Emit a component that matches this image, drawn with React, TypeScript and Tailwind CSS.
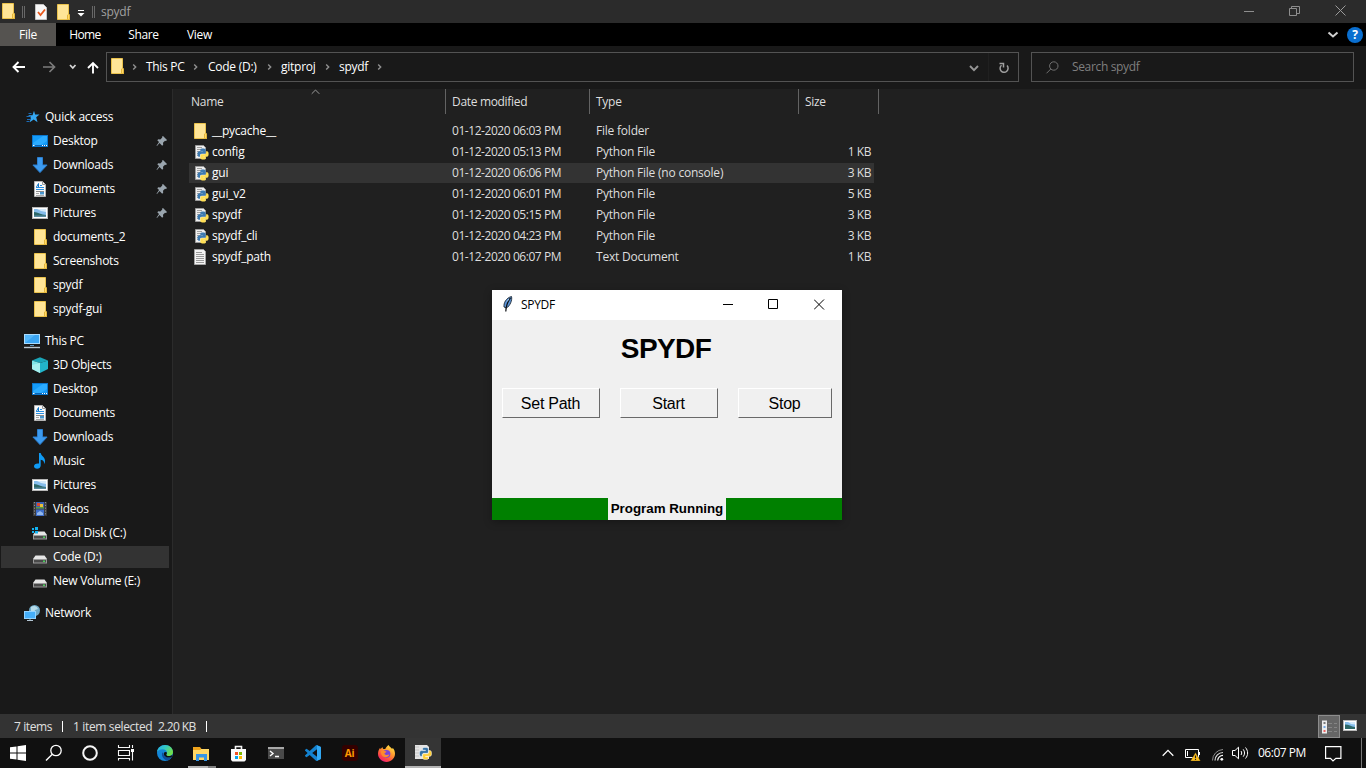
import type { ReactNode } from "react";

const PY_BLUE =
  "M14.25.18l.9.2.73.26.59.3.45.32.34.34.25.34.16.33.1.3.04.26.02.2-.01.13V8.5l-.05.63-.13.55-.21.46-.26.38-.3.31-.33.25-.35.19-.35.14-.33.1-.3.07-.26.04-.21.02H8.77l-.69.05-.59.14-.5.22-.41.27-.33.32-.27.35-.2.36-.15.37-.1.35-.07.32-.04.27-.02.21v3.06H3.17l-.21-.03-.28-.07-.32-.12-.35-.18-.36-.26-.36-.36-.35-.46-.32-.59-.28-.73-.21-.88-.14-1.05-.05-1.23.06-1.22.16-1.04.24-.87.32-.71.36-.57.4-.44.42-.33.42-.24.4-.16.36-.1.32-.05.24-.01h.16l.06.01h8.16v-.83H6.18l-.01-2.75-.02-.37.05-.34.11-.31.17-.28.25-.26.31-.23.38-.2.44-.18.51-.15.58-.12.64-.1.71-.06.77-.04.84-.02 1.27.05z";
const PY_YELLOW =
  "M21.1 6.11l.28.06.32.12.35.18.36.27.36.35.35.47.32.59.28.73.21.88.14 1.04.05 1.23-.06 1.23-.16 1.04-.24.86-.32.71-.36.57-.4.45-.42.33-.42.24-.4.16-.36.09-.32.05-.24.02-.16-.01h-8.22v.82h5.84l.01 2.76.02.36-.05.34-.11.31-.17.29-.25.25-.31.24-.38.2-.44.17-.51.15-.58.13-.64.09-.71.07-.77.04-.84.01-1.27-.04-1.07-.14-.9-.2-.73-.25-.59-.3-.45-.33-.34-.34-.25-.34-.16-.33-.1-.3-.04-.25-.02-.2.01-.13v-5.34l.05-.64.13-.54.21-.46.26-.38.3-.32.33-.24.35-.2.35-.14.33-.1.3-.06.26-.04.21-.02.13-.01h5.84l.69-.05.59-.14.5-.21.41-.28.33-.32.27-.35.2-.36.15-.36.1-.35.07-.32.04-.28.02-.21V6.07h2.09l.14.01z";

function Svg({ children, w = 16, h = 16 }: { children: ReactNode; w?: number; h?: number }) {
  return (
    <svg width={w} height={h} viewBox={`0 0 ${w} ${h}`} fill="none" className="block shrink-0">
      {children}
    </svg>
  );
}

const Folder = ({ dx = 0 }: { dx?: number }) => (
  <Svg>
    <g transform={`translate(${dx} 0)`}>
      <path d="M1.5.5h11v9.500l1 1v4.500h-12z" fill="#ffe597" stroke="#eac24c" />
      <path d="M11.5 15.5v-4.500l1-.9 1 .9v4.500z" fill="#ffd867" stroke="#e3b53a" />
    </g>
  </Svg>
);

const Star = () => (
  <Svg>
    <path d="M10 1.800l1.100 3.600h4.400l-3.300 2.800 1.300 5-3.800-2.700-4 2.700 1.200-4.400L4.200 6.200h4.300z" fill="#36a9f4" />
    <path d="M4.500 4.500h3M2.500 7.500h4.500M3 10.500h3.500M2.500 12.500h3" stroke="#1b6cb8" />
  </Svg>
);

const Desktop = () => (
  <Svg>
    <rect x=".5" y="2.500" width="15" height="11" fill="#149bf8" stroke="#0b76cc" />
    <path d="M1 10L11 3h4v5L9 12H1z" fill="#2babff" />
    <path d="M1 12.500h14" stroke="#0a63b4" />
    <path d="M1 12.500h1.500M10 12.500h1M12 12.500h1M14 12.500h1" stroke="#fff" />
  </Svg>
);

const Download = () => (
  <Svg>
    <path d="M5.500.500h5V8h4.600L8 15.600.900 8h4.600z" fill="#3c9bf0" stroke="#2b7fd0" />
  </Svg>
);

const DocIcon = () => (
  <Svg>
    <path d="M2.500.500h8l3 3v12h-11z" fill="#fafafa" stroke="#b5b5b5" />
    <path d="M10.500.500v3h3" stroke="#999" />
    <path d="M4 6.500h8M4 8.500h8M8 4.500h2" stroke="#2a8fe0" />
    <path d="M4.500 6L6.500 2.500V6" stroke="#1277c8" />
    <path d="M4 10.500h8" stroke="#8a8a8a" />
    <path d="M4 12.500h3M4 14.500h8" stroke="#a8a8a8" />
    <rect x="8" y="11" width="4" height="2.500" fill="#4795ce" />
  </Svg>
);

const Picture = () => (
  <Svg>
    <rect x=".5" y="2.500" width="15" height="11" fill="#fff" stroke="#b8b8b8" />
    <rect x="2" y="4" width="12" height="8" fill="#86bdec" />
    <path d="M5 4h9v3L9 6z" fill="#d5eafa" />
    <path d="M2 7c4 0 7 3 12 3v2H2z" fill="#2d6868" />
    <path d="M2 10.500h12V12H2z" fill="#5a8ca2" />
  </Svg>
);

const Monitor = () => (
  <Svg>
    <rect x=".5" y="1.500" width="15" height="9" fill="#54b7fb" stroke="#a9dcff" />
    <path d="M1 10L11 2h4v8z" fill="#3aa5f3" />
    <path d="M6 12.500h4" stroke="#5a93bd" />
    <path d="M0 14.500h16" stroke="#b9c7d2" strokeWidth="1.400" />
  </Svg>
);

const Cube = () => (
  <Svg>
    <path d="M8 .300l8 3.200L8 6 0 3.500z" fill="#1aa5b8" />
    <path d="M0 3.500L8 6v10l-8-4z" fill="#7fe6e8" />
    <path d="M16 3.500L8 6v10l8-4z" fill="#22b5ca" />
    <path d="M0 8l8-2v10l-8-4z" fill="#a5f0ef" />
  </Svg>
);

const Music = () => (
  <Svg>
    <path d="M7 0h1.700c.3 3 5 4.300 4.300 8.800-.1.900-.6 1.800-1 2.300.4-2.300-.4-4-3.300-4.400V12.500c0 2-1.700 3.300-3.600 3.300C3.300 15.800 2 14.800 2 13.300c0-1.900 1.900-3.200 5-2.800z" fill="#0f9bf5" />
  </Svg>
);

const Video = () => (
  <Svg>
    <rect x="1" y="1" width="14" height="14" fill="#3c3c3c" />
    <path d="M2.500 1v14M13.500 1v14" stroke="#8d8d8d" strokeDasharray="1.200 1.600" />
    <rect x="4" y="1" width="8" height="6.500" fill="#3a62b5" />
    <rect x="4" y="8.500" width="8" height="6.500" fill="#3f6fca" />
    <path d="M5 2h3v3H5z" fill="#d9482e" />
    <path d="M8 3h3v3H8z" fill="#e8bf3a" />
    <path d="M4 6h8v1.500H4z" fill="#5a9940" />
    <path d="M5 12l3-2 3 2v2H5z" fill="#93b7ea" />
  </Svg>
);

function Drive({ win = false }: { win?: boolean }) {
  return (
    <Svg>
      <path d="M3.500 6.500h9L15 10H1z" fill="#e6e6e6" />
      <rect x="1" y="10" width="14" height="4.500" fill="#9a9a9a" />
      <rect x="2" y="11" width="12" height="2.500" fill="#4a4a4a" />
      <rect x="11" y="11.500" width="2" height="1.500" fill="#4bd15b" />
      {win && <path d="M0 3h2v2H0zM3 2h3v3H3zM0 6h2v2H0zM3 6h3v2.500H3z" fill="#12b2f1" />}
    </Svg>
  );
}

const Network = () => (
  <Svg>
    <circle cx="10.500" cy="5.500" r="5.500" fill="#6fa9c6" />
    <path d="M7 2c3-2 6-1 7 2l-3 1-1 3-3-2z" fill="#b5dbe9" />
    <rect x=".5" y="6.500" width="11" height="7" fill="#45aef8" stroke="#92d3ff" />
    <path d="M3 15.500h6" stroke="#b3c6d4" />
    <path d="M6 14v1" stroke="#7aa" />
  </Svg>
);

const Pin = () => (
  <Svg w={12} h={12}>
    <path d="M7 1l4 4-1 1-1-.3-2 2 .2 2-1 1-2.700-2.700L1 11l-.5-.3L3 7 1.300 5.200l1-1 2 .2 2-2L6 1.800z" fill="#9aa5ae" />
  </Svg>
);

const PyFile = () => (
  <Svg>
    <path d="M2.500 1.500h8l2 2v11h-10z" fill="#efefef" stroke="#9c9c9c" />
    <path d="M4 3.500h5M4 5.500h6M4 7.500h4M4 9.500h3M4 11.500h3" stroke="#a0a0a0" />
    <g transform="translate(4.500 4.500) scale(.46)">
      <path d={PY_BLUE} fill="#3d7ab0" />
      <path d={PY_YELLOW} fill="#ffdf55" />
    </g>
  </Svg>
);

const TxtFile = () => (
  <Svg>
    <path d="M1.500.500h9l2 2v13h-11z" fill="#f4f4f4" stroke="#a5a5a5" />
    <path d="M3 3.500h6M3 5.500h8M3 7.500h8M3 9.500h8M3 11.500h8M3 13.500h8" stroke="#9a9a9a" />
  </Svg>
);

const Chev = () => (
  <Svg w={6} h={8}>
    <path d="M1.200 1.500L3.700 4 1.200 6.500" stroke="#909090" strokeWidth="1.400" />
  </Svg>
);

type NavEntry = { icon: ReactNode; label: string; top?: boolean; pin?: boolean; selected?: boolean };

const quick: NavEntry[] = [
  { icon: <Star />, label: "Quick access", top: true },
  { icon: <Desktop />, label: "Desktop", pin: true },
  { icon: <Download />, label: "Downloads", pin: true },
  { icon: <DocIcon />, label: "Documents", pin: true },
  { icon: <Picture />, label: "Pictures", pin: true },
  { icon: <Folder dx={1} />, label: "documents_2" },
  { icon: <Folder dx={1} />, label: "Screenshots" },
  { icon: <Folder dx={1} />, label: "spydf" },
  { icon: <Folder dx={1} />, label: "spydf-gui" },
];

const pc: NavEntry[] = [
  { icon: <Monitor />, label: "This PC", top: true },
  { icon: <Cube />, label: "3D Objects" },
  { icon: <Desktop />, label: "Desktop" },
  { icon: <DocIcon />, label: "Documents" },
  { icon: <Download />, label: "Downloads" },
  { icon: <Music />, label: "Music" },
  { icon: <Picture />, label: "Pictures" },
  { icon: <Video />, label: "Videos" },
  { icon: <Drive win />, label: "Local Disk (C:)" },
  { icon: <Drive />, label: "Code (D:)", selected: true },
  { icon: <Drive />, label: "New Volume (E:)" },
];

const network: NavEntry[] = [{ icon: <Network />, label: "Network", top: true }];

function NavGroup({ items }: { items: NavEntry[] }) {
  return (
    <ul>
      {items.map((e) => (
        <li key={e.label} className="flex h-6 items-center pl-px">
          <div
            className={`flex h-[22px] w-[168px] items-center gap-[5px] ${e.top ? "pl-[23px]" : "pl-[31px]"} ${e.selected ? "bg-[#333333]" : ""}`}
          >
            {e.icon}
            <span className="grow whitespace-nowrap text-white">{e.label}</span>
            {e.pin && (
              <span className="mr-px">
                <Pin />
              </span>
            )}
          </div>
        </li>
      ))}
    </ul>
  );
}

const files = [
  { icon: <Folder />, name: "__pycache__", date: "01-12-2020 06:03 PM", type: "File folder", size: "" },
  { icon: <PyFile />, name: "config", date: "01-12-2020 05:13 PM", type: "Python File", size: "1 KB" },
  { icon: <PyFile />, name: "gui", date: "01-12-2020 06:06 PM", type: "Python File (no console)", size: "3 KB", selected: true },
  { icon: <PyFile />, name: "gui_v2", date: "01-12-2020 06:01 PM", type: "Python File", size: "5 KB" },
  { icon: <PyFile />, name: "spydf", date: "01-12-2020 05:15 PM", type: "Python File", size: "3 KB" },
  { icon: <PyFile />, name: "spydf_cli", date: "01-12-2020 04:23 PM", type: "Python File", size: "3 KB" },
  { icon: <TxtFile />, name: "spydf_path", date: "01-12-2020 06:07 PM", type: "Text Document", size: "1 KB" },
];

function TitleBar() {
  return (
    <header className="flex h-[23px] shrink-0 items-center bg-[#2b2b2b]">
      <div className="flex grow items-center">
        <span className="ml-px pb-px">
          <Folder />
        </span>
        <span className="ml-[5px] h-3 w-[3px] border-x border-[#686868]" />
        <span className="ml-[8px]">
          <Svg>
            <path d="M2.500.500h8l3 3v12h-11z" fill="#f8f8f8" stroke="#c4c4c4" />
            <path d="M5 8l2.500 3L12 5.500" stroke="#e8581c" strokeWidth="1.800" />
          </Svg>
        </span>
        <span className="ml-[7px]">
          <Folder />
        </span>
        <span className="ml-[5px] mt-[3px]">
          <Svg w={8} h={8}>
            <path d="M1 1.500h6" stroke="#fff" />
            <path d="M.5 4h7L4 7.500z" fill="#fff" />
          </Svg>
        </span>
        <span className="ml-[7px] h-3 w-[3px] border-x border-[#686868]" />
        <span className="ml-[6px] text-[#a0a0a0]">spydf</span>
      </div>
      <div className="mr-[20px] flex items-center gap-[35px] pb-[3px]">
        <Svg w={11} h={11}>
          <path d="M1 6.500h10" stroke="#8e8e8e" />
        </Svg>
        <Svg w={11} h={11}>
          <path d="M.5 3.500h7v7h-7zM2.500 3V1.500h8v7H8" stroke="#8e8e8e" />
        </Svg>
        <Svg w={11} h={11}>
          <path d="M.5.500l10 10M10.500.500l-10 10" stroke="#9b9b9b" />
        </Svg>
      </div>
    </header>
  );
}

function Ribbon() {
  return (
    <nav className="flex h-[23px] shrink-0 items-center bg-black text-white">
      <span className="flex h-full w-14 items-center justify-center bg-[#555350] pt-px">File</span>
      <span className="w-[58px] pt-px text-center tracking-[-0.6px]">Home</span>
      <span className="w-[59px] pt-px text-center tracking-[-0.35px]">Share</span>
      <span className="w-[53px] pt-px text-center">View</span>
      <span className="grow" />
      <Svg w={12} h={8}>
        <path d="M1.500 1.500L6 5.500l4.500-4" stroke="#cfcfcf" strokeWidth="2" />
      </Svg>
      <span className="ml-[8px] mr-[3px] flex size-4 items-center justify-center rounded-full bg-[#0a6fd0] text-[12px] font-bold">?</span>
    </nav>
  );
}

function AddressBar() {
  return (
    <div className="flex h-[43px] shrink-0 items-center bg-[#191919] text-white">
      <span className="ml-[12px] pb-px">
        <Svg w={14} h={12}>
          <path d="M1.500 6H13M6.500 1l-5 5 5 5" stroke="#fff" strokeWidth="1.900" />
        </Svg>
      </span>
      <span className="ml-[17px] pb-px">
        <Svg w={14} h={12}>
          <path d="M0 6h11.500M6.500 1l5 5-5 5" stroke="#7c7c7c" strokeWidth="1.700" />
        </Svg>
      </span>
      <span className="ml-[12px] pb-[2px]">
        <Svg w={8} h={6}>
          <path d="M1 1l2.800 3L6.500 1" stroke="#d8d8d8" strokeWidth="1.700" />
        </Svg>
      </span>
      <span className="ml-[10px]">
        <Svg w={12} h={13}>
          <path d="M6 12.500V2M1 7l5-5 5 5" stroke="#fff" strokeWidth="1.900" />
        </Svg>
      </span>
      <div className="ml-[7px] mb-px flex h-[30px] w-[913px] items-center border border-[#535353] pl-[2px]">
        <span className="pb-[2px]">
          <Folder dx={1} />
        </span>
        <span className="ml-[7px]"><Chev /></span>
        <span className="ml-[8px] w-[39px] whitespace-nowrap tracking-[-0.3px]">This PC</span>
        <span className="ml-[8px]"><Chev /></span>
        <span className="ml-[9px] w-[50px] whitespace-nowrap">Code (D:)</span>
        <span className="ml-[9px]"><Chev /></span>
        <span className="ml-[8px] w-[36px] whitespace-nowrap">gitproj</span>
        <span className="ml-[8px]"><Chev /></span>
        <span className="ml-[8px] w-[30px] whitespace-nowrap tracking-[-0.3px]">spydf</span>
        <span className="ml-[8px]"><Chev /></span>
        <span className="grow" />
        <span className="pt-[2px]">
          <Svg w={10} h={7}>
            <path d="M1 1l4 4.200L9 1" stroke="#969696" strokeWidth="1.900" />
          </Svg>
        </span>
        <span className="ml-[9px] h-[28px] w-px bg-[#202020]" />
        <span className="ml-[9px] mr-[8px] pt-px">
          <Svg w={12} h={12}>
            <path d="M3.500 3.200A4 4 0 1 0 9 3.500" stroke="#a0a0a0" strokeWidth="1.500" />
            <path d="M1.500 1.500h4v4" stroke="#a0a0a0" strokeWidth="1.500" />
          </Svg>
        </span>
      </div>
      <div className="ml-[12px] mb-px flex h-[30px] w-[323px] items-center border border-[#535353] pl-[13px] text-[#7f7f7f]">
        <Svg w={14} h={13}>
          <circle cx="8.800" cy="5" r="4.200" stroke="#707070" />
          <path d="M5.800 8L1.500 12.300" stroke="#707070" />
        </Svg>
        <span className="ml-[13px] tracking-[-0.35px]">Search spydf</span>
      </div>
    </div>
  );
}

function FileList() {
  return (
    <section className="flex grow flex-col bg-[#202020] text-[#dedede]">
      <div className="flex h-[25px] pl-[18px]">
        <div className="relative flex w-[255px] items-center border-r border-[#636363]">
          Name
          <span className="absolute left-[120px] top-0">
            <Svg w={9} h={6}>
              <path d="M.7 4.800L4.500 1l3.800 3.800" stroke="#9a9a9a" />
            </Svg>
          </span>
        </div>
        <div className="flex w-[144px] items-center border-r border-[#636363] pl-[6px] tracking-[-0.32px]">Date modified</div>
        <div className="flex w-[209px] items-center border-r border-[#636363] pl-[6px]">Type</div>
        <div className="flex w-[80px] items-center border-r border-[#636363] pl-[6px] tracking-[-0.3px]">Size</div>
      </div>
      <ul className="mt-[6px] pl-4">
        {files.map((f) => (
          <li key={f.name} className="h-[21px] w-[685px] pt-px">
            <div className={`flex h-5 items-center ${f.selected ? "bg-[#333333]" : ""}`}>
              <span className="ml-[4px] flex w-[19px]">{f.icon}</span>
              <span className="w-[240px] tracking-[-0.25px] text-white">{f.name}</span>
              <span className="w-[144px] tracking-[-0.44px]">{f.date}</span>
              <span className="w-[200px] tracking-[-0.22px]">{f.type}</span>
              <span className="mr-[3px] grow text-right tracking-[-0.45px]">{f.size}</span>
            </div>
          </li>
        ))}
      </ul>
    </section>
  );
}

function StatusBar() {
  return (
    <footer className="flex h-6 shrink-0 items-center bg-[#333333] text-[#e0e0e0]">
      <span className="ml-[14px] w-[48px] whitespace-nowrap pt-[2px] tracking-[-0.4px]">7 items</span>
      <span className="h-[11px] w-px bg-white" />
      <span className="ml-[10px] w-[85px] whitespace-nowrap pt-[2px] tracking-[-0.35px]">1 item selected</span>
      <span className="w-[48px] whitespace-nowrap pt-[2px] tracking-[-0.6px]">2.20 KB</span>
      <span className="h-[11px] w-px bg-white" />
      <span className="grow" />
      <span className="mt-px flex h-[23px] w-[22px] items-center justify-center border border-[#8d8d8d] bg-[#666666]">
        <Svg>
          <rect x="1" y="1.500" width="5" height="13" fill="#ececec" />
          <path d="M2.500 4h2" stroke="#555" strokeWidth="1.500" />
          <path d="M2.500 8h2" stroke="#4a90e2" strokeWidth="1.500" />
          <path d="M2.500 12h2" stroke="#e33" strokeWidth="1.500" />
          <path d="M7 4.500h4M13 4.500h3M7 8.500h4M13 8.500h3M7 12.500h4M13 12.500h3" stroke="#858585" />
        </Svg>
      </span>
      <span className="ml-[3px] mr-[7px] flex w-4 pb-[2px]">
        <Svg>
          <rect x=".5" y="3.500" width="13" height="10" fill="#fff" stroke="#b8b8b8" />
          <rect x="2" y="5" width="10" height="7" fill="#86bdec" />
          <path d="M5 5h7v2.500L8 7z" fill="#d5eafa" />
          <path d="M2 7.500c4 0 6 2 10 2.500v2H2z" fill="#2d6868" />
        </Svg>
      </span>
    </footer>
  );
}

function Tile({ children }: { children: ReactNode }) {
  return <span className="flex h-full w-[37px] items-center justify-center">{children}</span>;
}

function Taskbar() {
  return (
    <div className="flex h-[30px] shrink-0 items-center bg-[#101010] text-white">
      <span className="flex w-9 justify-center">
        <Svg>
          <path d="M0 2.300l6.500-.9V7.500H0zM7.500 1.300L16 0v7.500H7.500zM0 8.500h6.500v6.100L0 13.700zM7.500 8.500H16V16l-8.500-1.300z" fill="#fff" />
        </Svg>
      </span>
      <span className="flex w-9 justify-center">
        <Svg w={18} h={18}>
          <circle cx="11" cy="6.500" r="5.200" stroke="#fff" strokeWidth="1.300" />
          <path d="M7.300 10.200L1 16.500" stroke="#fff" strokeWidth="1.400" />
        </Svg>
      </span>
      <span className="flex w-9 justify-center">
        <Svg>
          <circle cx="8" cy="8" r="6.800" stroke="#f5f5f5" strokeWidth="2" />
        </Svg>
      </span>
      <span className="mr-[3px] flex w-9 justify-center">
        <Svg w={18} h={18}>
          <path d="M1.500 1v2.500h11V1M1.500 16.500V14.500h11v2" stroke="#f5f5f5" strokeWidth="1.100" />
          <path d="M1.500 6.500h11v5h-11z" stroke="#f5f5f5" strokeWidth="1.100" />
          <path d="M15.500 1v3M15.500 8v8.500" stroke="#f5f5f5" strokeWidth="1.100" />
          <rect x="14" y="5" width="3" height="3" fill="#fff" />
        </Svg>
      </span>
      <span className="flex h-full w-9 items-center justify-center">
        <svg width="16" height="16" viewBox="0 0 24 24" fill="none">
          <defs>
            <linearGradient id="edgeTop" x1="0" y1="0" x2="1" y2=".5">
              <stop offset="0" stopColor="#27aee8" />
              <stop offset=".5" stopColor="#33c8c4" />
              <stop offset="1" stopColor="#70e04b" />
            </linearGradient>
          </defs>
          <circle cx="12" cy="12" r="12" fill="#1386d8" />
          <path d="M0 11C.500 4.500 6 0 12 0c7 0 12 5 12 10.500 0 4-3 6-6 6-2.500 0-4-1-4-2 0-.7 1-1 1-2.700C15 8.500 12 6.500 8.500 6.500 4.500 6.500 1.200 8.500 0 11z" fill="url(#edgeTop)" />
          <path d="M8.500 11C6 14 8 20 13 22.500c3 1 7-.5 9-4-5 2-11-.5-12.500-4.500-.6-1.500-.5-2.500-1-3z" fill="#0f4c9c" />
          <path d="M10.500 11.500c1-1.500 3.500-1.500 4.400-.2.300 1.500-.9 2.200-.9 3.200 0 .8.700 2 3.500 2 2.500 0 4.500-1 5.500-2 .3 1-.5 3-1.500 4-3 .8-7 .5-9-1.400-2-1.600-3-3.600-2-5.600z" fill="#101010" />
        </svg>
      </span>
      <span className="flex h-full w-[37px] flex-col items-center">
        <span className="flex grow items-center pt-[2px]">
          <Svg w={17} h={15}>
            <path d="M0 1h7l1.500 2H16v11H0z" fill="#f0a41c" />
            <path d="M0 4h16v10H0z" fill="#ffd866" />
            <path d="M8 3h8v2H7z" fill="#ffd866" />
            <path d="M3 8h11v7h-3v-3.500H6V15H3z" fill="#3695e6" />
          </Svg>
        </span>
        <span className="flex h-[2px]">
          <span className="w-5 bg-[#b4b4b4]" />
          <span className="w-2 bg-[#808080]" />
        </span>
      </span>
      <Tile>
        <Svg w={15} h={17}>
          <path d="M4.500 5V1.500h6V5" stroke="#f5f5f5" strokeWidth="1.600" />
          <path d="M0 4h15v11l-1.500 1.500h-12L0 15z" fill="#fafafa" />
          <path d="M4 7h3v3H4z" fill="#f25022" />
          <path d="M8 7h3v3H8z" fill="#7fba00" />
          <path d="M4 11h3v3H4z" fill="#00a4ef" />
          <path d="M8 11h3v3H8z" fill="#ffb900" />
        </Svg>
      </Tile>
      <Tile>
        <Svg w={16} h={12}>
          <rect width="16" height="12" fill="#4a4a4a" />
          <rect width="16" height="2" fill="#a8a8a8" />
          <path d="M2 4l3 2.500L2 9M7 9.500h4" stroke="#fff" strokeWidth="1.400" />
        </Svg>
      </Tile>
      <Tile>
        <svg width="16" height="16" viewBox="0 0 24 24">
          <path
            d="M23.150 2.587L18.210.210a1.494 1.494 0 0 0-1.705.290l-9.460 8.630-4.120-3.128a.999.999 0 0 0-1.276.057L.327 7.261A1 1 0 0 0 .326 8.740L3.899 12 .326 15.260a1 1 0 0 0 .001 1.479L1.650 17.940a.999.999 0 0 0 1.276.057l4.120-3.128 9.460 8.630a1.492 1.492 0 0 0 1.704.290l4.942-2.377A1.500 1.500 0 0 0 24 20.060V3.939a1.500 1.500 0 0 0-.850-1.352zm-5.146 14.861L10.826 12l7.178-5.448v10.896z"
            fill="#1482cf"
          />
          <path d="M18 .300l5.200 2.300c.5.300.8.800.8 1.400v16c0 .6-.3 1.100-.8 1.400L18 23.700z" fill="#32a8f3" />
        </svg>
      </Tile>
      <Tile>
        <span className="flex size-4 items-center justify-center rounded-[3px] bg-[#330000] font-['Open_Sans'] text-[10px] font-bold leading-none text-[#ff9a00]">Ai</span>
      </Tile>
      <Tile>
        <svg width="17" height="17" viewBox="0 0 24 24">
          <defs>
            <linearGradient id="fox" x1=".85" y1="0" x2=".2" y2="1">
              <stop offset="0" stopColor="#fff04a" />
              <stop offset=".4" stopColor="#ff9a2e" />
              <stop offset=".75" stopColor="#ff4545" />
              <stop offset="1" stopColor="#e31587" />
            </linearGradient>
          </defs>
          <path d="M15 0c1 2.500 3.500 3.500 5 5.500.6-.2.700-1 .5-1.500C23 6 24 9.500 24 12.500 24 19 18.500 24 12 24S0 19 0 12.500C0 9 1.500 6 3 4l.5 2C4.200 4.800 5.300 3.500 6.500 3c0 1 .3 2 1 2.500h2.700C11.500 3 13 1.500 15 0z" fill="url(#fox)" />
          <circle cx="12" cy="12.500" r="5.500" fill="#7a45d8" />
          <path d="M4 9c3-2 5 0 8 0-.5 1.800-3 2-3 3.500 2 3 5 1 7 1-1 3-4 4.500-7 3.500-3-1-5-4-5-8z" fill="#ff8a2e" />
        </svg>
      </Tile>
      <span className="flex h-full w-9 flex-col items-center border-b-2 border-[#b4b4b4] bg-[#353535] pt-[6px]">
        <Svg w={18} h={18}>
          <path d="M1 1h12l2 2v12H1z" fill="#e4e4e4" />
          <path d="M1 3h4M1 6h4M1 9h4M1 12h4" stroke="#c4c4c4" />
          <g transform="translate(5.500 3.500) scale(.5)">
            <path d={PY_BLUE} fill="#3572a5" stroke="#fff" strokeWidth="1" />
            <path d={PY_YELLOW} fill="#ffcf3a" stroke="#fff" strokeWidth="1" />
          </g>
        </Svg>
      </span>
      <span className="grow" />
      <Svg w={12} h={8}>
        <path d="M.7 6.700L6 1.400l5.300 5.300" stroke="#fff" strokeWidth="1.300" />
      </Svg>
      <span className="ml-[11px] mt-[4px]">
        <Svg w={16} h={14}>
          <path d="M.5 1.500h13v8H.500z" stroke="#fff" />
          <path d="M14 4h1v3h-1z" fill="#fff" />
          <path d="M2.500 3v5" stroke="#fff" />
          <path d="M10.500 4.500L15.500 13h-10z" fill="#ffc01e" stroke="#101010" strokeWidth=".3" />
          <path d="M10.500 7.500v2.700M10.500 11v1" stroke="#222" strokeWidth="1.200" />
        </Svg>
      </span>
      <span className="ml-[10px] mt-[3px]">
        <Svg w={14} h={13}>
          <path d="M1.500 12.500A11 11 0 0 1 12 1.500" stroke="#8a8a8a" />
          <path d="M4 12.500A8 8 0 0 1 12 4.500" stroke="#dcdcdc" strokeWidth="1.200" />
          <path d="M6.700 12.500A5.300 5.300 0 0 1 12 7.300" stroke="#fff" strokeWidth="1.200" />
          <circle cx="10.800" cy="11.300" r="1.400" fill="#fff" />
        </Svg>
      </span>
      <span className="ml-[7px]">
        <Svg w={17} h={14}>
          <path d="M.5 4.500H3L6.500 1.200v11.600L3 9.500H.500z" stroke="#fff" />
          <path d="M9 5c.9 1.200.9 2.800 0 4M11.200 3.300c1.800 2.200 1.800 5.200 0 7.400M13.500 1.500c2.800 3.300 2.800 7.700 0 11" stroke="#fff" />
        </Svg>
      </span>
      <span className="ml-[9px] w-[50px] whitespace-nowrap tracking-[-0.5px]">06:07 PM</span>
      <span className="ml-[17px] mt-px">
        <Svg w={17} h={16}>
          <path d="M.6.600h15.300v11.800h-5L8 15l-2.500-2.600H.600z" stroke="#fff" strokeWidth="1.200" />
        </Svg>
      </span>
      <span className="ml-[19px] mr-1 h-full w-px bg-[#777]" />
    </div>
  );
}

function TkButton({ label, wide }: { label: string; wide: boolean }) {
  return (
    <button
      className={`h-[30px] border border-b-[#696969] border-l-white border-r-[#696969] border-t-white pr-px pt-[2px] text-[16px] leading-none ${wide ? "w-[98px]" : "w-[94px]"}`}
    >
      {label}
    </button>
  );
}

function SpydfWindow() {
  return (
    <div className="absolute left-[492px] top-[290px] flex h-[230px] w-[350px] flex-col bg-[#f0f0f0] text-black shadow-[0_2px_8px_rgba(0,0,0,0.3)]">
      <div className="flex h-[30px] items-center bg-white">
        <span className="ml-[10px] pb-[2px]">
          <Svg w={12} h={16}>
            <path d="M2 11C1.500 7 4 2 9.500.500 10.500 4 8 10 4.500 12z" fill="#5b93d6" stroke="#1c2733" strokeWidth=".9" />
            <path d="M8.500 2C6 5 4 9 3.800 15.500" stroke="#0b0f14" strokeWidth="1.200" />
            <path d="M5 5.500l2-2.500" stroke="#a9cdf0" />
          </Svg>
        </span>
        <span className="ml-[7px] grow tracking-[-0.3px]">SPYDF</span>
        <div className="mr-[17px] flex items-center gap-[35px] pb-px">
          <Svg w={11} h={11}>
            <path d="M1 5.500h10" stroke="#000" />
          </Svg>
          <Svg w={11} h={11}>
            <path d="M.5.500h9v9h-9z" stroke="#000" />
          </Svg>
          <Svg w={11} h={11}>
            <path d="M0 .500l10 10M10 .500l-10 10" stroke="#000" />
          </Svg>
        </div>
      </div>
      <div className="flex grow flex-col font-['Liberation_Sans',Arial,sans-serif]">
        <h1 className="mt-[13px] pr-[2px] text-center text-[28px] font-bold leading-8 tracking-[-0.6px]">SPYDF</h1>
        <div className="mt-[23px] flex gap-5 px-[10px]">
          <TkButton label="Set Path" wide />
          <TkButton label="Start" wide />
          <TkButton label="Stop" wide={false} />
        </div>
        <div className="mt-auto flex h-[22px] justify-center bg-[#008000]">
          <span className="flex w-[118px] items-center justify-center whitespace-nowrap bg-[#f0f0f0] text-[13.33px] font-bold tracking-normal">Program Running</span>
        </div>
      </div>
    </div>
  );
}

export default function App() {
  return (
    <div className="relative flex h-[768px] w-[1366px] flex-col overflow-hidden bg-[#191919] font-['Open_Sans','Noto_Sans',sans-serif] text-[12px] leading-4 tracking-[-0.25px]">
      <TitleBar />
      <Ribbon />
      <AddressBar />
      <div className="flex min-h-0 grow">
        <aside className="flex w-[173px] shrink-0 flex-col gap-2 border-r border-[#2b2b2b] bg-[#191919] pt-4">
          <NavGroup items={quick} />
          <NavGroup items={pc} />
          <NavGroup items={network} />
        </aside>
        <FileList />
      </div>
      <StatusBar />
      <Taskbar />
      <SpydfWindow />
    </div>
  );
}
